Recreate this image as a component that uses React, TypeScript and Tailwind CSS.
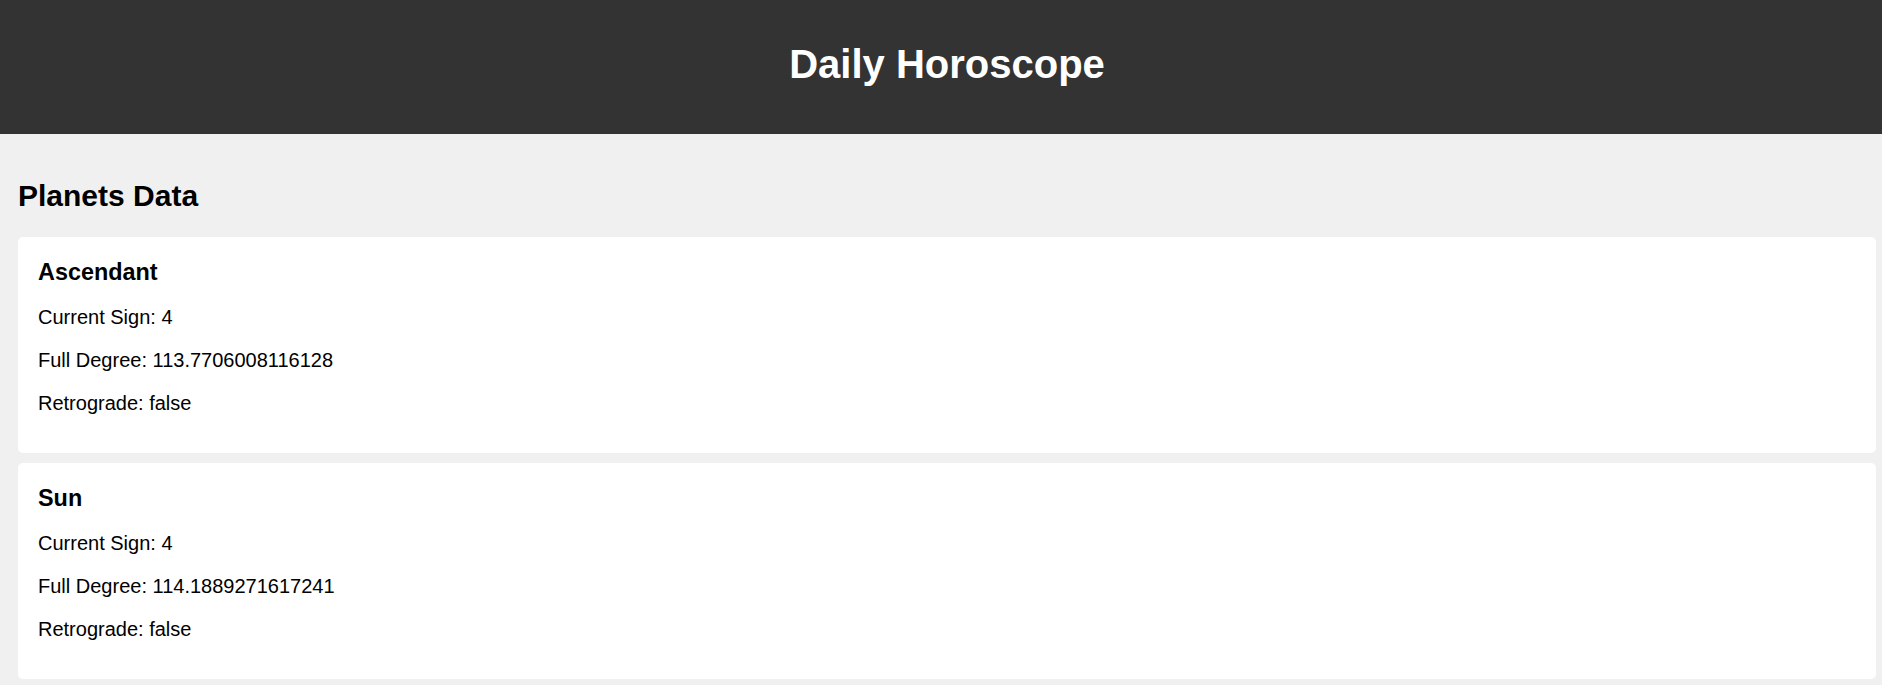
const planets = [
  { name: 'Ascendant', current_sign: 4, fullDegree: 113.7706008116128, isRetro: 'false' },
  { name: 'Sun', current_sign: 4, fullDegree: 114.1889271617241, isRetro: 'false' },
]

export default function App() {
  return (
    <div className="min-h-screen bg-[#f0f0f0] font-['Liberation_Sans',Arial,sans-serif] text-black">
      {/* Header */}
      <header className="bg-[#333333] pt-[41px] pb-[47px] pl-[12px] text-center">
        <h1 className="text-[40px] leading-[46px] font-bold text-white">Daily Horoscope</h1>
      </header>

      {/* Planets */}
      <main className="pt-[44px] pl-[18px] pr-[6px]">
        <h2 className="text-[30px] leading-[35px] font-bold mb-[24px]">Planets Data</h2>
        <div className="flex flex-col gap-[10px]">
          {planets.map((p) => (
            <PlanetCard key={p.name} {...p} />
          ))}
        </div>
      </main>
    </div>
  )
}

const PlanetCard = ({
  name,
  current_sign,
  fullDegree,
  isRetro,
}: {
  name: string
  current_sign: number
  fullDegree: number
  isRetro: string
}) => {
  return (
    <div className="bg-white rounded-[5px] pt-[22px] pb-[38px] px-[20px]">
      <h3 className="text-[23.4px] leading-[27px] font-bold mb-[20px]">{name}</h3>
      <div className="flex flex-col gap-[20px] text-[20px] leading-[23px]">
        <p>Current Sign: {current_sign}</p>
        <p>Full Degree: {fullDegree}</p>
        <p>Retrograde: {isRetro}</p>
      </div>
    </div>
  )
}
